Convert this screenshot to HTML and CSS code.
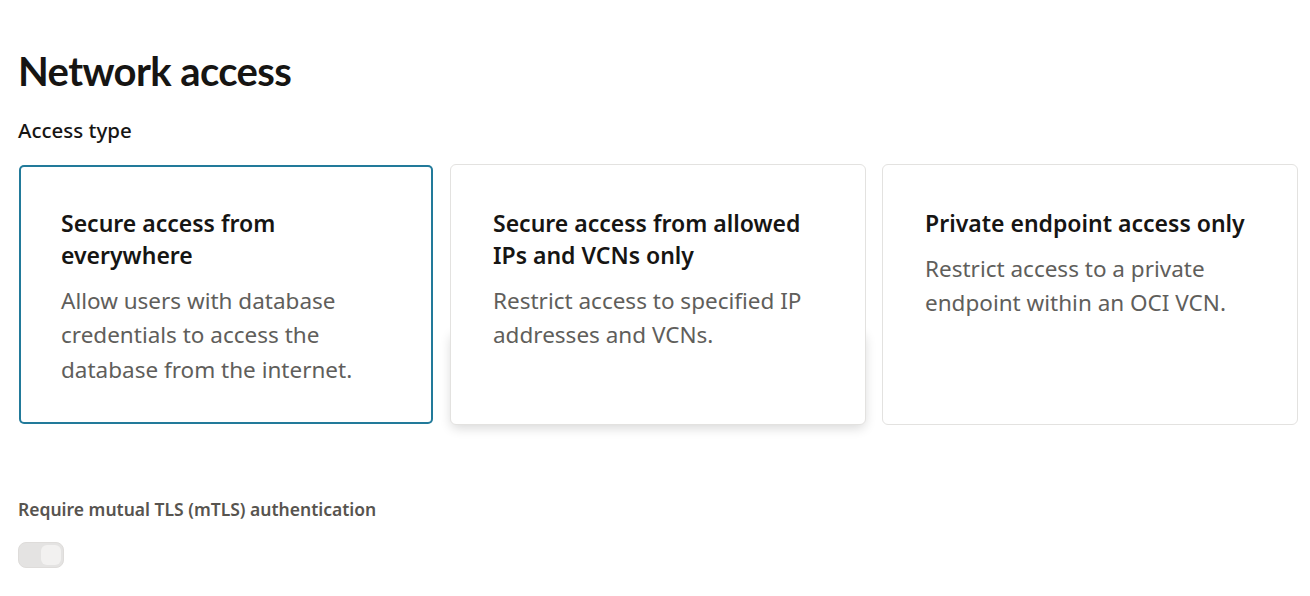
FILE: index.html
```html
<!DOCTYPE html>
<html lang="en">
<head>
<meta charset="utf-8">
<title>Network access</title>
<link rel="stylesheet" href="styles.css">
</head>
<body>
<main class="page">
  <h1 class="page-title">Network access</h1>
  <div class="field-label">Access type</div>
  <div class="card-row">
    <div class="card card-selected">
      <div class="card-title">Secure access from everywhere</div>
      <div class="card-desc">Allow users with database credentials to access the database from the internet.</div>
    </div>
    <div class="card card-hover">
      <div class="card-title">Secure access from allowed IPs and VCNs only</div>
      <div class="card-desc">Restrict access to specified IP addresses and VCNs.</div>
    </div>
    <div class="card">
      <div class="card-title">Private endpoint access only</div>
      <div class="card-desc">Restrict access to a private endpoint within an OCI VCN.</div>
    </div>
  </div>
  <div class="switch-label">Require mutual TLS (mTLS) authentication</div>
  <div class="switch"><span class="switch-knob"></span></div>
</main>
</body>
</html>
```

FILE: styles.css
```css
html {
  background: #ffffff;
}
html, body {
  margin: 0;
  padding: 0;
}
body {
  font-family: "Noto Sans", "Open Sans", sans-serif;
  color: #161513;
}
.page {
  padding: 47px 12px 0 18px;
  display: flex;
  flex-direction: column;
}
.page-title {
  margin: 0;
  font-family: Lato, "Noto Sans", sans-serif;
  font-size: 40px;
  line-height: 48px;
  font-weight: 700;
  letter-spacing: -0.6px;
}
.field-label {
  margin-top: 23px;
  font-size: 20.5px;
  line-height: 24px;
  font-weight: 500;
}
.card-row {
  margin-top: 22px;
  display: grid;
  grid-template-columns: repeat(3, 1fr);
  gap: 16px;
  isolation: isolate;
}
.card {
  position: relative;
  height: 261px;
  box-sizing: border-box;
  border: 1px solid #e3e2e0;
  border-radius: 6px;
  background: #fff;
  padding: 42px 30px 0 42px;
}
.card-selected {
  border-color: transparent;
  box-shadow: inset 0 0 0 2px #227a9a;
}
.card-hover::before {
  content: "";
  position: absolute;
  left: 0;
  right: 0;
  top: 166px;
  bottom: 0;
  border-radius: 6px;
  box-shadow: 0 4px 12px rgba(0, 0, 0, 0.16);
  z-index: -1;
}
.card-title {
  font-size: 23px;
  line-height: 32px;
  font-weight: 600;
  color: #161513;
}
.card-desc {
  margin-top: 12.5px;
  font-size: 22.5px;
  line-height: 34.5px;
  color: #605e5b;
}
.switch-label {
  margin-top: 73px;
  font-size: 17.5px;
  line-height: 22px;
  font-weight: 600;
  color: #57544f;
}
.switch {
  margin-top: 22px;
  width: 46px;
  height: 26px;
  box-sizing: border-box;
  border-radius: 8px;
  background: #e4e3e2;
  border: 1px solid #dedcda;
  display: flex;
  align-items: center;
  justify-content: flex-end;
  padding-right: 2px;
}
.switch-knob {
  width: 20px;
  height: 20px;
  border-radius: 6px;
  background: #f2f1f0;
}
```
